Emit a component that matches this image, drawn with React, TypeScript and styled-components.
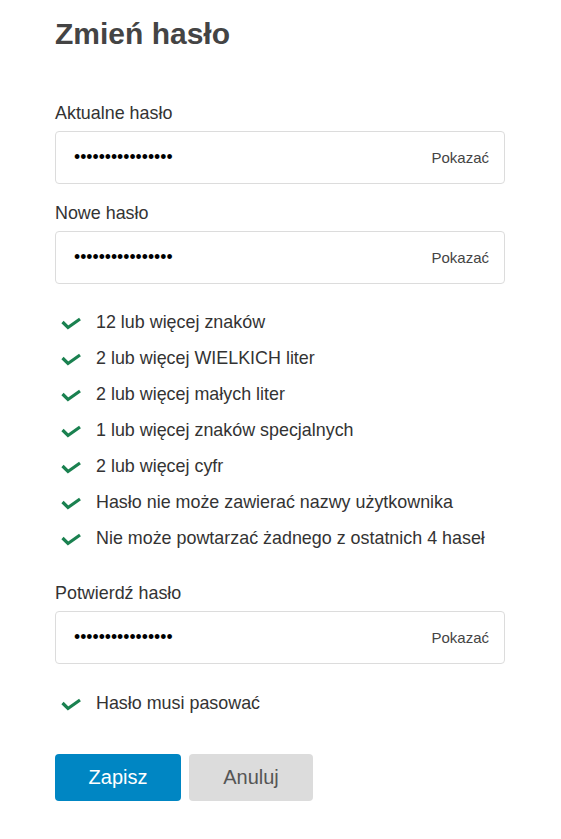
import React from "react";
import styled, { createGlobalStyle } from "styled-components";

const GlobalStyle = createGlobalStyle`
  body {
    margin: 0;
    background: #fff;
    font-family: "Liberation Sans", Arial, sans-serif;
    color: #333;
  }
`;

const Page = styled.div`
  width: 450px;
  padding: 16px 0 0 55px;
`;

const Title = styled.h1`
  margin: 0 0 51px;
  font-size: 30px;
  line-height: 36px;
  font-weight: 700;
  color: #444;
`;

const Field = styled.div<{ $mb: number }>`
  display: flex;
  flex-direction: column;
  gap: 8px;
  margin-bottom: ${(p) => p.$mb}px;
`;

const Label = styled.label`
  font-size: 17.9px;
  line-height: 20px;
  color: #333;
`;

const InputBox = styled.div`
  display: flex;
  align-items: center;
  height: 53px;
  box-sizing: border-box;
  border: 1px solid #dcdcdc;
  border-radius: 4px;
  padding: 0 15px 0 18px;
`;

const PasswordInput = styled.input`
  flex: 1;
  min-width: 0;
  border: none;
  outline: none;
  padding: 0;
  font-family: "Liberation Sans", Arial, sans-serif;
  font-size: 17.6px;
  color: #000;
  background: transparent;
`;

const ShowButton = styled.button`
  border: none;
  background: none;
  padding: 0;
  font-family: "Liberation Sans", Arial, sans-serif;
  font-size: 15px;
  color: #444;
  cursor: pointer;
`;

const Checklist = styled.ul<{ $mb: number }>`
  list-style: none;
  margin: 0 0 ${(p) => p.$mb}px;
  padding: 0;
`;

const CheckItem = styled.li`
  display: flex;
  align-items: center;
  gap: 15px;
  height: 36px;
  padding-left: 6px;
  font-size: 17.9px;
  color: #333;
`;

const Actions = styled.div`
  display: flex;
  gap: 8px;
`;

const Button = styled.button<{ $primary?: boolean }>`
  height: 47px;
  width: ${(p) => (p.$primary ? 126 : 124)}px;
  border: none;
  border-radius: 4px;
  font-family: "Liberation Sans", Arial, sans-serif;
  font-size: 20px;
  background: ${(p) => (p.$primary ? "#0086c3" : "#dcdcdc")};
  color: ${(p) => (p.$primary ? "#fff" : "#555")};
  cursor: pointer;
`;

const Check = () => (
  <svg width="20" height="16" viewBox="0 0 20 16" fill="none">
    <path d="M1.5 8 L7 13.5 L19 5" stroke="#1a8150" strokeWidth="3.2" />
  </svg>
);

const PasswordField = ({ label, mb }: { label: string; mb: number }) => (
  <Field $mb={mb}>
    <Label>{label}</Label>
    <InputBox>
      <PasswordInput type="password" readOnly value="aaaaaaaaaaaaaaaa" />
      <ShowButton type="button">Pokazać</ShowButton>
    </InputBox>
  </Field>
);

const rules = [
  "12 lub więcej znaków",
  "2 lub więcej WIELKICH liter",
  "2 lub więcej małych liter",
  "1 lub więcej znaków specjalnych",
  "2 lub więcej cyfr",
  "Hasło nie może zawierać nazwy użytkownika",
  "Nie może powtarzać żadnego z ostatnich 4 haseł",
];

export default function App() {
  return (
    <>
      <GlobalStyle />
      <Page>
        <Title>Zmień hasło</Title>
        <PasswordField label="Aktualne hasło" mb={19} />
        <PasswordField label="Nowe hasło" mb={20} />
        <Checklist $mb={27}>
          {rules.map((r) => (
            <CheckItem key={r}>
              <Check />
              {r}
            </CheckItem>
          ))}
        </Checklist>
        <PasswordField label="Potwierdź hasło" mb={21} />
        <Checklist $mb={33}>
          <CheckItem>
            <Check />
            Hasło musi pasować
          </CheckItem>
        </Checklist>
        <Actions>
          <Button $primary type="button">Zapisz</Button>
          <Button type="button">Anuluj</Button>
        </Actions>
      </Page>
    </>
  );
}
